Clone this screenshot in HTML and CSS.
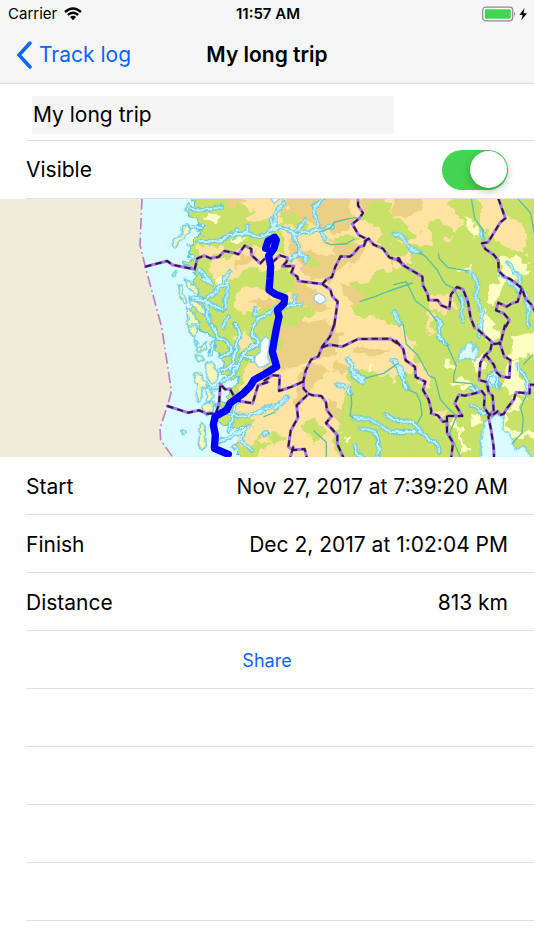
FILE: index.html
```html
<!DOCTYPE html>
<html lang="en">
<head>
<meta charset="utf-8">
<meta name="viewport" content="width=device-width, initial-scale=1">
<title>My long trip</title>
<link rel="stylesheet" href="styles.css">
</head>
<body>
<header class="top">
  <div class="status">
    <div class="carrier"><span>Carrier</span>
      <svg class="wifi" viewBox="0 0 18 14" aria-hidden="true"><path d="M1 5Q9-2.200 17 5M3.800 7.900Q9 3.400 14.200 7.900" fill="none" stroke="#000" stroke-width="2.400"/><path d="M5.900 10Q9 7.600 12.100 10L9 13.200Z"/></svg>
    </div>
    <span class="clock">11:57 AM</span>
    <svg class="battery" viewBox="0 0 46 16" aria-hidden="true"><rect x=".7" y="1.200" width="30" height="13.600" rx="3" fill="#fff" stroke="#8c8c8c" stroke-width="1.200"/><rect x="2.800" y="3.200" width="26" height="9.600" rx="1.200" fill="#43d551"/><path d="M32 5.500q2 2.500 0 5z" fill="#8c8c8c"/><path d="M42.500 2L37.400 9h3.300L39.200 14.500 45 7.200h-3.400z"/></svg>
  </div>
  <nav class="nav">
    <a class="back" href="#"><svg viewBox="0 0 16 28" aria-hidden="true"><path d="M14 2L3 14l11 12" fill="none" stroke="#0a65ff" stroke-width="3.500" stroke-linecap="round" stroke-linejoin="miter"/></svg>Track log</a>
    <h1>My long trip</h1>
  </nav>
</header>
<main>
  <div class="row name-row"><input class="name" type="text" aria-label="Track name" value="My long trip"></div>
  <div class="row"><label for="visible">Visible</label><input id="visible" class="switch" type="checkbox" role="switch" checked></div>
  <svg class="map" viewBox="0 0 1602 774" role="img" aria-label="Map of the track">
    <defs>
      <filter id="rough" x="0" y="0" width="1" height="1" color-interpolation-filters="sRGB"><feTurbulence type="fractalNoise" baseFrequency=".035" numOctaves="2" seed="4"/><feDisplacementMap in="SourceGraphic" scale="42" xChannelSelector="R" yChannelSelector="G"/></filter>
      <filter id="ripple" x="0" y="0" width="1" height="1" color-interpolation-filters="sRGB"><feTurbulence type="fractalNoise" baseFrequency=".05" numOctaves="2" seed="9"/><feDisplacementMap in="SourceGraphic" scale="18" xChannelSelector="R" yChannelSelector="G"/></filter>
      <g id="islands">
        <g transform="translate(390 -12)"><path d="M162 38l14-8 10 12-12 11zM158 92l20-3 1 27-20 14-14 12-10 17-11-10 5-15 26-15zM130 234l9-4 5 9-9 6zM142 268l12 4 5 22 12 26-8 7-14-22zM163 253l18 6 23 25 3 14-22-9-18-20zM178 303l23 14 20 20 8 23-19-3-24-26zM170 340l20 13 17 30-3 14h-28z"/></g>
        <g transform="translate(390 378)"><path d="M175 0h20l8 16-7 22-15-15zM195 43l8 8-3 11-8-8zM198 68l17 2 3-14 12-3-5 20-12 9-16-2zM198 90l19 2 3 14-17 2zM226 116l20-5 20 30-5 24-16 12-17-23zM190 147l23-2 4 17 15 10-4 16-12 5-1 32-11 7-8-28 6-21zM228 188l10-6 12 29-8 21-12-8zM216 248l20-21 15 3-2 29-23 10zM212 293l12 6 5 66-14 10-10-15zM154 320l9-5 7 9-9 8zM302 366l8-8 10 5-5 14z"/></g>
      </g>
      <g id="fjords">
        <g transform="translate(390 -12)"><path d="M178 42l45 2 55-8M180 95l34 7M205 141l37 1 32-8 30-15 48-4 35 10 35-5M308 129l13-26M345 117l7-25M207 225l22 20 17 24M220 250l16 8M224 319l24-20 24-27 24-3-10 50 3 22M272 272l30-45M224 319l30 15 22 10M190 310l38 7 8 65M280 396l15-32M365 396l18-25 37-20M375 360V340"/></g>
        <g transform="translate(792 -12)"><path d="M0 123l28-22 20-4 33 10 13 12 36-8 30-4 45-13M30 98l5-40 20-35M28 95L20 70M84 115l17 35 7 27 19 8-2 14M105 173l-26 20M155 106l8-17-11-30-4-24 21-12 12-14M170 108l13 22M96 108l28-35M0 362l28-20 43-9 43-5M82 330l15-26"/></g>
        <g transform="translate(390 378)"><path d="M245 0l20 40 30 10 10 30-32 15M315 0l15 25-10 40-20 70M250 50l-10 38M375 0l-10 28 22 24-45 30-30 60-60 50M335 90l35 13M275 135l53-18M262 244l38 24 50 4 50-14M313 266l-17 50M310 260l17-35M260 350l40-14 60-32M344 306l-9 44 30 27"/></g>
        <g transform="translate(792 378)"><path d="M249 98l16 20-3 16 20 13 14 26-27-18-7-18M266 151l38 8M217 177l24 9 19 19-5-16M0 249l20-6M35 248l32-29M0 327l10-5M268 278l42 5 37 15 35 23 38-2M292 309l40 10 10 25 2 52M365 270l25 15 30 4M272 360l6 24 20 12M385 105l12 8 25 40"/></g>
        <g transform="translate(1182 -12)"><path d="M0 115l25 10 30 42 20 4M262 105l6 24M343 203l15 26 20 13-6 45M320 238l36 27 19 23M219 228l19 12 14 34-6 29 12 29 7 25-5 40M200 305l8 21-5 18 3 32M0 350l17 36M128 368l13 22M392 290l8 32 4 72"/></g>
        <g transform="translate(1182 378)"><path d="M140 0l-8 36 26 21M0 110l14 17 8 26 17 38M370 120l14 24 17 24-4 40M0 283l22 7 18-4 28 14 3 15 29 24 28 16 8 30M0 322l65-2M229 185l24 13M233 240l24 19 24 8M259 0l5 20-10 15M290 187l-8-15v-24l23-4 7 42"/></g>
      </g>
      <g id="borders">
        <g transform="translate(390 -12)"><path d="M46 215l66-17 14 11 68 14 8-33 21-8 19 8 24-4 17-18 32 6 10 4 19-26 20 10v18l27 25 22-23"/></g>
        <g transform="translate(792 -12)"><path d="M25 202l23-21 22 7-2 12-13 14 35-1-8 20 18 12 3 13 72 9 13-14 16-7 10-31 16-31 27 1 9-6 20-24 14-3 8-20-24-12-19-33 21-17 11-16-15-23v-21M175 267l24 17 6 20 16 16-11 76M302 139l12-8 15 18 28 12 19 26 24 8 20 14"/></g>
        <g transform="translate(390 378)"><path d="M112 243l62 20 34-7 22 10 27-1 10-26 4-62 14 16 15-1 12 22 10 13 46 8 16-54 30-10"/></g>
        <g transform="translate(792 378)"><path d="M210 0l-12 35-23 29-12 30-22 10-16 33-7 32 1 22 14 16-35 34 4 37-22 39-7 49 15 9 34-3 6 24M88 365l-9 31M175 67l22-8 38 6 47-23 97-1 23 16M0 168l25-17 22 1-2 46 39-13 33-15M133 206l13 5 26 2 14 19 3 24 14 18-17 20 18 18 16 19v26l18 40"/></g>
        <g transform="translate(1182 -12)"><path d="M10 190h5l9 19 61 36 2 26 14 27 3 18 27-1 11 16 24 10 5-43 18-22 18 7 15 38 8 48 12 30M313 10l21 60-15 12-16 26-21 34-18 3 10 17 25 17 14 18 1 31 17 17 19 8 33 26 12 32 18 19 10 20M383 280l-12 40-19 6-14 9-25-12-7 23 23 9 17 20-12 23"/></g>
        <g transform="translate(1182 378)"><path d="M6 47l22 26 7 33 28 20 2 30 29 14-7 25 17 29 8 32-1 9 20 6 16 19 12-2V273h46l-23-38 13-26 17 3 31-7 20-7 9 12-2 36 12 19 11 7 18-13 7 11 11-3 12-20 19-24 6-21 41 3v-26h26M252 14l19 17 30 26 19-3 13-54M293 57l-4 20-17 15-13 22-4 51 23 6 6 30 12 12 3 43-16 19 8 38 8 53 1 30M275 89l25 31 6 20 14 14 26 4 3-53-18-10-15-45M159 273v50l18 30-5 43"/></g>
      </g>
    </defs>
    <rect width="1602" height="774" fill="#f1ebda"/>
    <path fill="#d9fcff" d="M426-2l-6 140 16 65 49 181 28 184v15l-11 38-22 67 2 35 36 51H1602V-2z"/>
    <g filter="url(#rough)">
      <path class="land" d="M565-40l14 60-15 27 17 10 25 35-12 24-24 24 5 30-28 18 42 26-11 32 15 38-18 44 14 40 18 40 48 5-30 45 39 9 7 22-10 41 55 7-20 48-45 40 10 40 56 25 60-25-20 33-55 37 20 38-12 25 45 20-12 55 60-2 21 66H1650V-40z"/>
      <g class="tan">
        <path d="M655-25l50 40 65 22-40 20 12 20 60-15 30 20 30-15 60 35V-30zM589 142l40-12 40 20-35 25-30 0zM624 185l70-14 40-25 60-10 75 45-35 32-80-6-60 38-45 3zM700 285l40-22 80 12 70 10-10 35-50-14-75 33-45-7zM840 45l90-80h430l-20 45 25 25 30 50-25 8-65-37-30 30 30 40-40 18-85-20-22 40 24 44-60 16-30 62 50 18 67-20 18 40-60 50 50 20 30 60-10 60-100 60-60 10-130-25-60 45-50 10 20-50 50-60-10-80 15-80-50-90z"/>
        <path d="M700 420l32-17 30 12-10 29-34 8zM730 510l60-25 60-28 80-40 120 40 70 20-15 30 40 28-60 52-5 60 26 50-20 50 35 60H820l-48-36 40-40-34-20-40 34-30-26 60-60-60-18zM1070 390l65-25 80 40 30 25-50 35-75 5-58-30zM1080 640l30-18 40 10-8 20-44 8zM1160 625l30 8-8 18-32-4zM1040 715l30-10 14 22-30 17zM1437-25h53l28 70 56 44 7 82-50-20-63-38-31-36zM1332 120l30-10-5 18-27 6zM1182 180l50-24 6 30-36 24-20-9zM1280 296l60-14 30 15-5 35-35 12-40-25zM1240 330l40-4 30 28-22 34-34-25zM1240 377h40l25 24-45-5zM1240 500l24-12 30 50 12 30-50-16zM1182 628l26-10 5 23-31 14zM1294 645l40-16-3 24-29 8z"/>
      </g>
      <g class="sand">
        <path d="M860-20h210l-30 50 35 30-40 33-45 15-65-43-30 20 10 70 90 15 10-30-30-15 70-10 45 38-22 40-60 23-20 38-76-26-20-46-30 4 10-56 24-42-42-40zM1080-20h96l-30 47 45 15-18 23-56-10-26 25zM1182-25h88l-10 65-45 15-35-15zM868 235l70 25 45 70-48 10-53-25zM1020 250l95 42-18 30-60-17zM838 380l130-20 62 42-23 58-80 30-90 30-50-22 40-40zM910 510l55-20 30 24-42 30-20 40-40-30zM1064 432l70 18 45 2-55 20-65-15zM900 550l25 22-24 60-16-28zM982 590l44 54-10 30-38-40zM1002 490l45 8-12 32-35-10zM650-20l90 20-50 22zM690 185l54-14 30-23-20 40-50 14zM748 305l82-14 20 22-60 14z"/>
      </g>
      <g class="green">
        <path d="M850 40l60 16 22 28-40 8-38-28zM915 170l32 8 10 24-24 9-24-23zM866 170l-20 70-26 30 30 28 18-28 20 8-10-48zM1000 106l34 6 50-4-25 26-35 5zM1098 20l60-10 55 70 45 20-20 23-70 0-40-45-50-5zM1130 110l60 6 10 36-70-15zM1045 250l25-6 24 15 80-10 14 16-56 10-25 24-52-34zM1058 320l50-22 100-58 80 50-15 115-75-20-65-30-70-5zM1190 290l20-8 10 15-20 7zM878 335l38-8 35 15-30 10-40 27-15-18zM798 710l40-14 20 20-36 22zM905 685l42-30 30 38-30 45zM1046 500l44 10 90 24 70 80-20 190H1020l-20-80 24-30-14-38 32-70zM830 400l-15 50 30-8z"/>
      </g>
      <g class="pale">
        <path d="M1396 50l13 0 20 33 17 19-12 14-34-30zM1500 170l47 3 50 25-20 28-70 28-32 70-14-14 12-40 29-40zM1370 203l35 4 12 18-32-8zM1436 340l20-5 34 45 12 40-42 8-19-40zM1535 420l97-28v57l-65 32-32 0zM1330 472l26 20 10 25-25-14zM1520 500l25-18 27 65 10 51-30-18-30 10-7-48zM1358 560l-14-16 36-5 34 10 8 25-40-13zM1350 655l8-8 34 60 12 60h-20l4-30zM1422 645l20 7 0 32-16-7zM1540 590l26 14-6 24-30 18-20 55-10-10 23-56zM1490 675l42 14 40 16 60-10v25l-74-4-53 3zM1104 500l10 3-4 16-10-4zM1036 704l15 3-11 14-9-7zM1422 478l26-20 3 55-24 13zM690 118l30-8 22 8-26 14zM640 250l26-16 14 20-26 10zM612 60l20-18 34 8-20 20z"/>
      </g>
    </g>
    <g filter="url(#ripple)">
      <g class="lakes"><path d="M1372 475l20-27 8-13 17-3 1 25 12-18 4 18-8 27-30-6-18 9zM1440 794l4-90 12-38 30-15 20-5 2 42 26 25 12 45 28-18 28 54zM1464 525l24-13 10 7-6 38-26-6z"/></g>
      <use href="#islands" class="island"/>
      <use href="#fjords" class="shore"/><use href="#fjords" class="water"/>
    </g>
    <g class="snow"><path d="M764 488l2-16 14-12 2-30 14-18 13 11-7 51 8 17-20 12-14 2zM944 289l13-7 17 10 3 13-17 11-18-13zM812-1h28l-17 14z"/></g>
    <g class="river">
      <path d="M960 98l30-10 14-19 46-11 20-2M975 129l16 8 47-2 24-14M1080 307l45-14 42-17 70-24M1414-2l10 60 25 35v22M1552-2l40 44 10 60M1257 160l20 13 35 40 18 34 8 10 24 11 20 43M1316 165l2 14 25 26 61 11M1182 257l36-9 10 19 19 39 40 30 23 30M1210 376l9 60 34 33 34 61 18 8 16 63 23 26 22 20M1340 435l29 66-8 30v18l54 5 12 16M1572 495l26-28M1582 580l-20 47 8 31-4 44-30 32M1222 570l28 14 11 24 5 39-15 28M1370 652l-21 50 32 72M792 653l34-14M1096 537l55-14 43-30M1053 586l2 28-5 36 10 6M942 696l37 34 0 46"/>
    </g>
    <path class="sea-limit" d="M426-2l-6 140 16 65 49 181 28 184v15l-11 38-22 67 2 35 36 51"/>
    <use href="#borders" class="border"/><use href="#borders" class="border-dash"/>
    <path class="track" d="M797 148l7-22 20-11 5 8-7 25-16 22 6 33-2 35-3 35 20 13 27 10-2 17-20 20 5 20-7 31-8 44-5 30 13 45-38 23-30 17-12 20-20 20-40 30-10 20-35 20-5 25 6 30-3 40 42 18"/>
  </svg>
  <dl class="facts">
    <div class="row"><dt>Start</dt><dd>Nov 27, 2017 at 7:39:20 AM</dd></div>
    <div class="row"><dt>Finish</dt><dd>Dec 2, 2017 at 1:02:04 PM</dd></div>
    <div class="row"><dt>Distance</dt><dd>813 km</dd></div>
  </dl>
  <div class="row share-row"><button class="share" type="button">Share</button></div>
  <div class="row"></div>
  <div class="row"></div>
  <div class="row"></div>
  <div class="row"></div>
</main>
</body>
</html>
```

FILE: styles.css
```css
* { box-sizing: border-box; }
body { margin: 0; background: #fff; color: #000; font: 21px/28px Inter, Roboto, sans-serif; }
.top { background: #f6f6f6; border-bottom: 1px solid #dedede; }
.status { display: grid; grid-template-columns: 1fr auto 1fr; align-items: center; height: 28px; padding: 0 6px 0 8px; font-size: 15px; line-height: 20px; }
.carrier { display: flex; align-items: center; gap: 7px; }
.wifi { width: 18px; height: 14px; }
.clock { font-weight: 600; }
.battery { width: 46px; height: 16px; justify-self: end; }
.nav { display: grid; grid-template-columns: 1fr auto 1fr; align-items: center; height: 55px; padding: 0 16px 2px; }
.back { display: flex; align-items: center; gap: 7px; color: #0a65ff; text-decoration: none; }
.back svg { width: 16px; height: 28px; }
h1 { margin: 0; font-size: 21px; line-height: 28px; font-weight: 600; }
.row { display: flex; align-items: center; justify-content: space-between; height: 58px; margin-left: 26px; padding-right: 26px; border-bottom: 1px solid #e0e0e2; }
.name-row { height: 57px; padding-left: 6px; padding-top: 5px; }
.name { width: 76%; height: 38px; padding: 0 1px; border: 0; border-radius: 0; background: #f5f5f5; color: #000; font: inherit; }
.switch { appearance: none; display: flex; width: 66px; height: 40px; margin: 0; padding: 1px; border-radius: 20px; background: #e5e5ea; }
.switch::before { content: ""; width: 37px; height: 37px; border-radius: 50%; background: #fff; box-shadow: 0 3px 8px rgba(0, 0, 0, .28); }
.switch:checked { justify-content: flex-end; background: #43d551; }
.map { display: block; width: 100%; height: auto; }
.facts { margin: 0; }
.facts .row { padding-top: 2px; }
dd { margin: 0; }
.share-row { justify-content: center; padding: 2px 26px 0 0; }
.share { padding: 0; border: 0; background: none; color: #0a65ff; font: inherit; font-size: 18px; }

.land { fill: #c8e169; stroke: #5ac6ec; stroke-width: 4; }
.tan { fill: #ffe3a1; }
.sand { fill: #ebcf84; }
.green { fill: #c8e169; }
.pale { fill: #fdffc2; }
.lakes { fill: #d9fcff; stroke: #6ccdf0; stroke-width: 4; }
.snow { fill: #fff; stroke: #8fd2ee; stroke-width: 4; }
.island { fill: #f5f8b4; stroke: #5ac6ec; stroke-width: 4; }
.shore, .water, .river, .border, .border-dash, .track, .sea-limit { fill: none; stroke-linejoin: round; stroke-linecap: round; }
.shore { stroke: #5ac6ec; stroke-width: 13; }
.water { stroke: #c4f3ff; stroke-width: 6; }
.river { stroke: #5dbf9f; stroke-width: 4; }
.sea-limit { stroke: #c47acb; stroke-width: 5; stroke-dasharray: 34 10 5 10; stroke-linecap: butt; }
.border { stroke: #a873f0; stroke-width: 9; }
.border-dash { stroke: #2d1b3c; stroke-width: 6; stroke-dasharray: 19 12; stroke-linecap: butt; }
.track { stroke: #00f; stroke-width: 22; }
```
